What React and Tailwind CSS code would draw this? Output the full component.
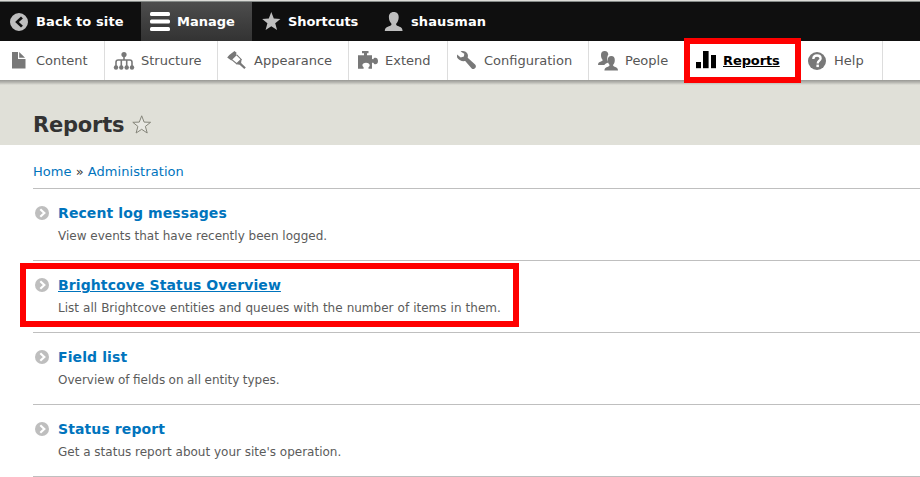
const ICONS = {
  back: (
    <path fillRule="evenodd" d="M9 2a9 9 0 1 0 0 18A9 9 0 0 0 9 2zm2 3.600 1.900 1.800L8.900 11l4 3.700-1.900 1.900L5.100 11z" />
  ),
  bars: (
    <>
      <rect y="1" width="20" height="4" rx="1.500" />
      <rect y="8.600" width="20" height="3.800" rx="1.500" />
      <rect y="16" width="20" height="4" rx="1.500" />
    </>
  ),
  star: <path d="M9.300 1 11.800 7.600l6.600.3-5.200 4.300 1.900 6.900-5.800-3.900-5.700 3.900 1.800-6.900L.2 7.900l6.600-.3z" />,
  user: (
    <path d="M9.800 1c3.400 0 4.900 2.100 4.900 5.200 0 2.900-1.200 5-2.400 6.300-.5 1 .1 2.100 1.400 2.600 2.600 1 4.700 1.500 4.900 4.900H.8c.2-3.400 2.500-3.900 5-4.900 1.400-.5 2-1.600 1.500-2.600C6 10.900 4.900 9.100 4.900 6.200 4.900 3.100 6.400 1 9.800 1z" />
  ),
  content: (
    <>
      <path d="M0 2h6v7h7.500v9.500H0z" />
      <path d="M7.200 2 13 7.800H7.200z" />
    </>
  ),
  structure: (
    <>
      <circle cx="10" cy="4.600" r="2.600" />
      <circle cx="2" cy="17.500" r="2.200" />
      <circle cx="7.300" cy="17.500" r="2.200" />
      <circle cx="12.700" cy="17.500" r="2.200" />
      <circle cx="18" cy="17.500" r="2.200" />
      <path d="M10 6v4M2 17v-4.800c0-1.500.7-2.200 2.200-2.200h11.600c1.500 0 2.200.7 2.200 2.200V17M7.300 17v-7M12.700 17v-7" fill="none" stroke="currentColor" strokeWidth="1.600" />
    </>
  ),
  appearance: (
    <>
      <path d="M7.500.9 9.800 3l-.9 1.100 1 1-5.600 5.300L.2 7.400 2.300 5z" />
      <path d="m9.700 4.800 4.500 4.600-4.500 4.300-5.200-4.400" fill="none" stroke="currentColor" strokeWidth="1.100" />
      <path d="m9.400 14.200 5.200-5.200-.5 4.100 4.700 4.300-1.500 1.700-4.700-4.400z" />
    </>
  ),
  extend: (
    <path d="M4 1h6.500v2.200H9v2h5v3.900l1.300.1c.4-.9 1-1.400 2-1.400 1.600 0 2.700 1.200 2.700 3.300s-1.100 3.200-2.700 3.200c-1 0-1.600-.7-2-1.500H14v6h-3.500v-1.600c.9-.5 1.200-1.100 1.200-1.900 0-1.600-1.400-2.600-3.700-2.600-2.200 0-3.600 1-3.600 2.600 0 .8.400 1.400 1.200 1.900v1.600H0V5.200h6v-2H4z" />
  ),
  wrench: (
    <path d="M3.600 1.400C6.300.2 9.400 1.400 10.600 4c.5 1.200.5 2.500.1 3.800l7.400 6.700c2.300 2.200-.8 5.900-3.400 4L8.200 11C5.200 11.700 1 10 0 7.200L.1 4.500l3.600 3.100 3.200-1 .4-2.900z" />
  ),
  people: (
    <>
      <path d="M6.700 1c2.300 0 3.500 1.400 3.600 3.500C9 6.200 9 9 9.800 11.200l.5 1.200c-1.700.5-3.200 1.200-4 2.600H0c0-2.400 1.300-2.800 3-3.500 1.400-.5 2-1 1.400-2C3.600 8.300 3 7 3 4.900 3 2.600 4.200 1 6.700 1z" />
      <path d="M13.300 6c2.400 0 3.500 1.700 3.500 3.900 0 2-.6 3.600-1.500 4.600-.6 1.100 0 1.700 1.300 2.200 1.900.6 3.400 1.300 3.400 3.800H6.400c0-2.500 1.500-3.200 3.600-3.800 1.300-.5 1.900-1.100 1.300-2.200-.9-1-1.500-2.600-1.500-4.600 0-2.200 1.100-3.900 3.500-3.900z" />
    </>
  ),
  reports: (
    <>
      <path d="M0 12h5v6.200H0z" />
      <path d="M7 1h5.600v17.200H7z" />
      <path d="M15 5h5v13.200h-5z" />
    </>
  ),
  help: (
    <>
      <circle cx="9" cy="11" r="9" />
      <path d="M5.300 9c.1-2.200 1.600-3.500 3.700-3.500 2.200 0 3.600 1.200 3.600 2.900 0 2.200-2.900 2.500-2.900 5" fill="none" stroke="#fff" strokeWidth="2.300" />
      <rect x="8.400" y="14.600" width="2.500" height="2.500" fill="#fff" />
    </>
  ),
};

function Icon({ name, className }) {
  return (
    <svg viewBox="0 0 20 20" className={`mb-px h-5 w-5 shrink-0 overflow-visible ${className}`} fill="currentColor">
      {ICONS[name]}
    </svg>
  );
}

const TRAY = [
  { name: "content", label: "Content", width: "w-[105px]", icon: "ml-3 mr-1" },
  { name: "structure", label: "Structure", width: "w-[113px]", icon: "ml-[9px] mr-[7px]" },
  { name: "appearance", label: "Appearance", width: "w-[131px]", icon: "ml-[9px] mr-[7px]" },
  { name: "extend", label: "Extend", width: "w-[99px]", icon: "ml-[9px] mr-[7px]" },
  { name: "wrench", label: "Configuration", width: "w-[141px]", icon: "ml-[9px] mr-[7px]" },
  { name: "people", label: "People", width: "w-[98px]", icon: "ml-[9px] mr-[7px]" },
  { name: "reports", label: "Reports", width: "w-[111px]", icon: "ml-[9px] mr-[7px]", active: true },
  { name: "help", label: "Help", width: "w-[85px]", icon: "ml-[10px] mr-[6px]" },
];

const REPORTS = [
  { title: "Recent log messages", text: "View events that have recently been logged." },
  {
    title: "Brightcove Status Overview",
    text: "List all Brightcove entities and queues with the number of items in them.",
    spacing: "[word-spacing:0.25px]",
    marked: true,
  },
  { title: "Field list", text: "Overview of fields on all entity types.", spacing: "[word-spacing:-0.35px]" },
  { title: "Status report", text: "Get a status report about your site's operation." },
];

function BarItem({ name, label, className, icon }) {
  return (
    <a className={`flex h-full items-center ${className}`}>
      <Icon name={name} className={icon} />
      <span>{label}</span>
    </a>
  );
}

export default function App() {
  return (
    <div className="h-[477px] w-[920px] overflow-hidden bg-white font-['DejaVu_Sans',sans-serif] text-[13px] text-[#333]">
      <div className="h-[2px] border-b border-[#858a88] bg-[#dcdcd8]" />
      <nav className="flex h-[39px] bg-[#0f0f0f] font-bold leading-[39px] text-white">
        <BarItem name="back" label="Back to site" className="w-[141px] tracking-[0.1px]" icon="ml-[10px] mr-[6px] text-[#bebebe]" />
        <BarItem name="bars" label="Manage" className="w-[111px] bg-linear-to-b from-[#4d4d4d] to-[#333]" icon="ml-[9px] mr-[7px]" />
        <BarItem name="star" label="Shortcuts" className="w-[123px] tracking-[-0.1px]" icon="ml-[10px] mr-[6px] text-[#bebebe]" />
        <BarItem name="user" label="shausman" className="w-[130px] tracking-[0.1px]" icon="ml-[9px] mr-[7px] text-[#bebebe]" />
      </nav>
      <nav className="relative flex h-[39px] bg-white leading-[39px] text-[#565656]">
        {TRAY.map((t) => (
          <a key={t.name} className={`flex h-full items-center border-r border-[#ddd] ${t.width}`}>
            <Icon name={t.name} className={`${t.icon} ${t.active ? "text-black" : "text-[#787878]"}`} />
            <span className={t.active ? "font-bold tracking-[-0.1px] text-black underline" : ""}>{t.label}</span>
          </a>
        ))}
        <div className="absolute -top-[3px] left-[684px] z-10 h-[45px] w-[117px] border-6 border-[#f00]" />
      </nav>
      <header className="h-[65px] bg-[#e0e0d8]">
        <div className="h-[5px] bg-linear-to-b from-[#989894] via-[#b8b8b2] to-[#e0e0d8]" />
        <div className="flex h-[60px] items-center pl-[33px] pt-[19px]">
          <h1 className="text-[21px] font-bold leading-[30px] tracking-[-0.2px]">Reports</h1>
          <svg viewBox="0 0 20 20" className="ml-2 h-5 w-5" fill="#e8e8e2" stroke="#85857a" strokeWidth="1" strokeLinejoin="round">
            <path d="m9.700.8 2.400 6.300 6.500.2-5.200 4.100 1.800 6.600-5.500-3.700-5.600 3.700 1.800-6.600L.8 7.300l6.500-.2z" />
          </svg>
        </div>
      </header>
      <main className="pl-[33px]">
        <div className="h-[43px] pt-[17px] leading-[20px]">
          <a className="tracking-[0.05px] text-[#0074bd]">Home</a> » <a className="tracking-[0.07px] text-[#0074bd]">Administration</a>
        </div>
        <dl className="border-b border-[#bfbfbf]">
          {REPORTS.map((r) => (
            <div key={r.title} className="relative flex h-[72px] border-t border-[#bfbfbf] pt-[14px]">
              <svg viewBox="0 0 14 14" className="ml-[2px] mr-[9px] mt-[3px] h-[14px] w-[14px]">
                <circle cx="7" cy="7" r="7" fill="#bebebe" />
                <path d="m5.300 3.300 4 3.700-4 3.700" fill="none" stroke="#fff" strokeWidth="2.200" />
              </svg>
              <div>
                <dt className={`text-[14px] font-bold leading-[20px] tracking-[0.1px] text-[#0074bd] ${r.marked ? "underline" : ""}`}>{r.title}</dt>
                <dd className={`mt-[3px] text-[12px] leading-[20px] text-[#5b5b5b] ${r.spacing ?? ""}`}>{r.text}</dd>
              </div>
              {r.marked && <div className="absolute -left-[13px] top-[2px] h-[64px] w-[499px] border-6 border-[#f00]" />}
            </div>
          ))}
        </dl>
      </main>
    </div>
  );
}
